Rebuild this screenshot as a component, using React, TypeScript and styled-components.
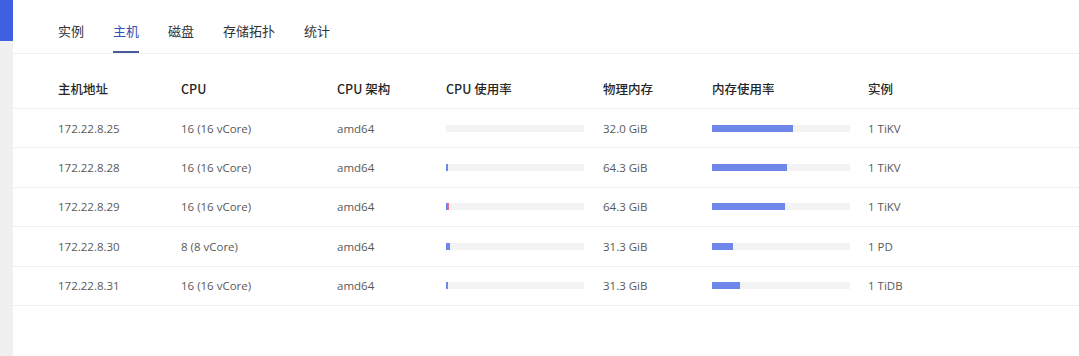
import React from "react";
import styled, { createGlobalStyle } from "styled-components";

const GlobalStyle = createGlobalStyle`
  html, body {
    margin: 0;
    padding: 0;
    background: #ffffff;
    font-family: "Open Sans", "Noto Sans CJK SC", sans-serif;
  }
`;

const Page = styled.div`
  display: flex;
  width: 1079px;
  height: 356px;
  overflow: hidden;
`;

const Side = styled.div`
  width: 13px;
  flex-shrink: 0;
  display: flex;
  flex-direction: column;
  background: #f0f0f0;
`;

const SideTop = styled.div`
  height: 41px;
  background: #3f5fe2;
`;

const Main = styled.div`
  flex: 1;
  display: flex;
  flex-direction: column;
`;

const Tabs = styled.div`
  display: flex;
  gap: 29px;
  padding-left: 45px;
  height: 54px;
  border-bottom: 1px solid #f0f0f0;
  box-sizing: border-box;
`;

const Tab = styled.div<{ $active?: boolean }>`
  display: flex;
  align-items: center;
  height: 100%;
  padding-top: 10px;
  box-sizing: border-box;
  font-family: "Noto Sans CJK SC", sans-serif;
  font-size: 13px;
  color: ${(p) => (p.$active ? "#3451b2" : "#333333")};
  border-bottom: 2px solid ${(p) => (p.$active ? "#4a5a9c" : "transparent")};
`;

const Table = styled.div`
  margin-top: 15px;
  display: flex;
  flex-direction: column;
`;

const Row = styled.div<{ $head?: boolean }>`
  display: grid;
  grid-template-columns: 123px 156px 109px 157px 109px 156px 1fr;
  align-items: center;
  padding-left: 45px;
  height: ${(p) => (p.$head ? "40px" : "39.4px")};
  border-bottom: 1px solid #efefef;
  box-sizing: border-box;
`;

const HeadCell = styled.div`
  font-family: "Noto Sans CJK SC", sans-serif;
  font-size: 12.5px;
  font-weight: 500;
  color: #262626;
`;

const Cell = styled.div`
  font-family: "Open Sans", "Noto Sans CJK SC", sans-serif;
  font-size: 11.5px;
  color: #595959;
`;

const Track = styled.div`
  width: 138px;
  height: 7px;
  background: #f3f3f3;
  display: flex;
`;

const Fill = styled.div<{ $color?: string }>`
  height: 100%;
  background: ${(p) => p.$color || "#6f86ea"};
`;

type Host = {
  addr: string;
  cpu: string;
  arch: string;
  cpuUse: number;
  cpuSys: number;
  mem: string;
  memUse: number;
  inst: string;
};

const hosts: Host[] = [
  { addr: "172.22.8.25", cpu: "16 (16 vCore)", arch: "amd64", cpuUse: 0, cpuSys: 0, mem: "32.0 GiB", memUse: 59, inst: "1 TiKV" },
  { addr: "172.22.8.28", cpu: "16 (16 vCore)", arch: "amd64", cpuUse: 1.5, cpuSys: 0, mem: "64.3 GiB", memUse: 54, inst: "1 TiKV" },
  { addr: "172.22.8.29", cpu: "16 (16 vCore)", arch: "amd64", cpuUse: 1.5, cpuSys: 0.8, mem: "64.3 GiB", memUse: 53, inst: "1 TiKV" },
  { addr: "172.22.8.30", cpu: "8 (8 vCore)", arch: "amd64", cpuUse: 3, cpuSys: 0, mem: "31.3 GiB", memUse: 15, inst: "1 PD" },
  { addr: "172.22.8.31", cpu: "16 (16 vCore)", arch: "amd64", cpuUse: 1.2, cpuSys: 0, mem: "31.3 GiB", memUse: 20, inst: "1 TiDB" },
];

const tabs = ["实例", "主机", "磁盘", "存储拓扑", "统计"];
const heads = ["主机地址", "CPU", "CPU 架构", "CPU 使用率", "物理内存", "内存使用率", "实例"];

export default function App() {
  return (
    <Page>
      <GlobalStyle />
      <Side>
        <SideTop />
      </Side>
      <Main>
        <Tabs>
          {tabs.map((t) => (
            <Tab key={t} $active={t === "主机"}>
              {t}
            </Tab>
          ))}
        </Tabs>
        <Table>
          <Row $head>
            {heads.map((h) => (
              <HeadCell key={h}>{h}</HeadCell>
            ))}
          </Row>
          {hosts.map((h) => (
            <Row key={h.addr}>
              <Cell>{h.addr}</Cell>
              <Cell>{h.cpu}</Cell>
              <Cell>{h.arch}</Cell>
              <Cell>
                <Track>
                  <Fill style={{ width: `${h.cpuUse}%` }} />
                  <Fill $color="#e5738a" style={{ width: `${h.cpuSys}%` }} />
                </Track>
              </Cell>
              <Cell>{h.mem}</Cell>
              <Cell>
                <Track>
                  <Fill style={{ width: `${h.memUse}%` }} />
                </Track>
              </Cell>
              <Cell>{h.inst}</Cell>
            </Row>
          ))}
        </Table>
      </Main>
    </Page>
  );
}
